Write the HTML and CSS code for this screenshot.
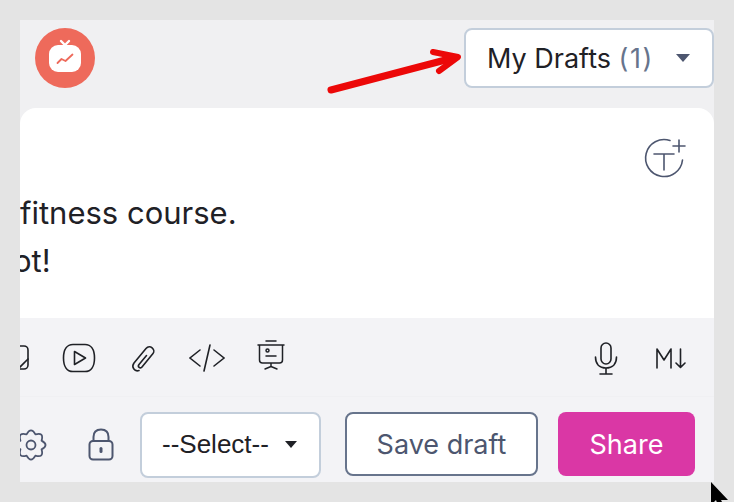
FILE: index.html
```html
<!DOCTYPE html>
<html lang="en">
<head>
  <meta charset="UTF-8">
  <title>My Drafts</title>
  <link rel="stylesheet" href="styles.css">
</head>
<body>
  <div class="panel">
    <header class="header">
      <div class="logo">
        <svg width="60" height="60" viewBox="0 0 60 60">
          <circle cx="30" cy="30" r="30" fill="#ee6a5b"/>
          <path d="M26 13l4 4 4-4" fill="none" stroke="#fff" stroke-width="2.4" stroke-linecap="round"/>
          <rect x="14" y="17" width="32" height="27" rx="9" fill="#fff"/>
          <path d="M22.500 35l4-4 4 2 7-6.500" fill="none" stroke="#ee6a5b" stroke-width="1.800" stroke-linecap="round" stroke-linejoin="round"/>
        </svg>
      </div>
      <button class="drafts">
        <span>My Drafts <span class="count">(1)</span></span>
        <span class="caret caret-drafts"></span>
      </button>
    </header>

    <main class="card">
      <div class="card-tools">
        <svg width="46" height="46" viewBox="0 0 46 46" fill="none" stroke="#4d566f" stroke-width="1.600" stroke-linecap="round">
          <path d="M29 4.500A18.500 18.500 0 1 0 41.500 24"/>
          <path d="M13 18h20M23 18v16"/>
          <path d="M32 10h12M38 4v12"/>
        </svg>
      </div>
      <p class="line line-one">fitness course.</p>
      <p class="line line-two">ot!</p>
    </main>

    <div class="toolbar">
      <div class="tool-group">
        <svg class="icon-image" width="28" height="26" viewBox="0 0 28 26" fill="none" stroke="#1f2126" stroke-width="1.600" stroke-linecap="round">
          <rect x="1" y="1" width="26" height="23" rx="4"/>
          <path d="M17 24l10-10"/>
        </svg>
        <svg class="icon-play" width="34" height="30" viewBox="0 0 34 30" fill="none" stroke="#1f2126" stroke-width="1.600" stroke-linejoin="round">
          <path d="M11 1.500h12c6 0 9.500 5 9.500 13.500s-3.500 13.500-9.500 13.500H11C5 28.500 1.500 23.500 1.500 15S5 1.500 11 1.500z"/>
          <path d="M12.500 8.500l11 6.500-11 6.500z"/>
        </svg>
        <svg class="icon-clip" width="26" height="30" viewBox="0 0 26 30" fill="none" stroke="#1f2126" stroke-width="1.600" stroke-linecap="round">
          <path d="M16.500 12.500L9 21.500c-1.800 2.200 1.200 4.800 3 2.500L23 10.500c3-3.800-3-9.800-7-5L4 20c-3 4 .5 9 5 7.500"/>
        </svg>
        <svg class="icon-code" width="38" height="30" viewBox="0 0 38 30" fill="none" stroke="#1f2126" stroke-width="1.600" stroke-linecap="round">
          <path d="M12 7L2 15l10 8M26 7l10 8-10 8M22 2l-6 26"/>
        </svg>
        <svg class="icon-slides" width="28" height="30" viewBox="0 0 28 30" fill="none" stroke="#1f2126" stroke-width="1.500" stroke-linecap="round" stroke-linejoin="round">
          <path d="M9 1h10M1 5h26M2.500 5v15c0 2 1 3 3 3h17c2 0 3-1 3-3V5M14 23v3.500M8 29l6-2.500 6 2.500M9 16h10"/>
          <circle cx="10.500" cy="10.500" r="1.500"/>
        </svg>
      </div>
      <div class="tool-group tool-group-right">
        <svg class="icon-mic" width="26" height="33" viewBox="0 0 26 33" fill="none" stroke="#1f2126" stroke-width="1.600" stroke-linecap="round">
          <rect x="8" y="1" width="10" height="21" rx="5"/>
          <path d="M2.500 15c0 7 4 11 10.500 11s10.500-4 10.500-11M13 26v6M7 32h12"/>
        </svg>
        <svg class="icon-md" width="30" height="23" viewBox="0 0 30 23" fill="none" stroke="#1f2126" stroke-width="1.600" stroke-linecap="round" stroke-linejoin="round">
          <path d="M1 21V2l7 11 7-11v19M24.500 2v18M20 16l4.500 4.500L29 16"/>
        </svg>
      </div>
    </div>

    <footer class="footer">
      <svg class="icon-gear" width="32" height="34" viewBox="0 0 32 34" fill="none" stroke="#4d566f" stroke-width="1.800" stroke-linejoin="round">
        <path d="M26.600 12.600Q34.500 17 26.600 21.400Q29.100 30.100 20.400 27.600Q16 35.500 11.600 27.600Q2.900 30.100 5.400 21.400Q-2.500 17 5.400 12.600Q2.900 3.900 11.600 6.400Q16 -1.500 20.400 6.400Q29.100 3.900 26.600 12.600z"/>
        <circle cx="16" cy="17" r="4.500"/>
      </svg>
      <svg class="icon-lock" width="26" height="33" viewBox="0 0 26 33" fill="none" stroke="#4d566f" stroke-width="2" stroke-linejoin="round">
        <rect x="1.500" y="13" width="23" height="18.500" rx="3.500"/>
        <path d="M5.500 13V9c0-5 3-7.500 7.500-7.500S20.500 4 20.500 9v4"/>
        <rect x="11.500" y="19" width="3" height="6" rx="1.500" fill="#4d566f" stroke="none"/>
      </svg>
      <button class="select">
        <span>--Select--</span>
        <span class="caret caret-select"></span>
      </button>
      <button class="save">Save draft</button>
      <button class="share">Share</button>
    </footer>

    <svg class="arrow" width="140" height="50" viewBox="0 0 140 50" fill="none" stroke="#ec0808" stroke-linecap="round" stroke-linejoin="round">
      <path d="M6 41L128 9" stroke-width="7"/>
      <path d="M108 3l25 5-19 14" stroke-width="6"/>
    </svg>
  </div>

  <svg class="cursor" width="18" height="20" viewBox="0 0 18 20">
    <path d="M1 0l17 18-7 0 4 8H9l-3-8-5 5z" fill="#000"/>
  </svg>
</body>
</html>
```

FILE: styles.css
```css
body {
  margin: 0;
  height: 502px;
  overflow: hidden;
  background: #e4e4e4;
  font-family: Inter, "Liberation Sans", sans-serif;
}
button {
  font-family: inherit;
  cursor: pointer;
}
svg {
  display: block;
  flex: none;
}
.panel {
  position: relative;
  width: 694px;
  height: 462px;
  margin: 20px 0 0 20px;
  overflow: hidden;
  background: #f0f0f2;
}
.header {
  display: flex;
  align-items: flex-start;
  justify-content: space-between;
  height: 88px;
  padding: 8px 0 0 15px;
  box-sizing: border-box;
}
.drafts {
  display: flex;
  align-items: center;
  justify-content: space-between;
  width: 250px;
  height: 60px;
  padding: 0 22px 0 21px;
  background: #fff;
  border: 2px solid #c3cedb;
  border-radius: 8px;
  font-size: 27px;
  color: #1f2126;
}
.count {
  letter-spacing: 1.500px;
  color: #67748c;
}
.caret {
  display: block;
  width: 0;
  height: 0;
  border-style: solid;
  border-color: transparent;
  border-bottom-width: 0;
}
.caret-drafts {
  border-width: 8px 7.5px 0;
  border-top-color: #4d566f;
}
.caret-select {
  border-width: 7px 6.500px 0;
  border-top-color: #1f2126;
}
.card {
  height: 210px;
  box-sizing: border-box;
  padding-top: 28px;
  background: #fff;
  border-radius: 16px 16px 0 0;
}
.card-tools {
  display: flex;
  justify-content: flex-end;
  height: 53px;
  padding-right: 27px;
}
.line {
  margin: 0;
  height: 48px;
  line-height: 48px;
  font-size: 31px;
  color: #1f2126;
  white-space: nowrap;
}
.line-two {
  margin-left: -7px;
}
.toolbar {
  display: flex;
  align-items: center;
  justify-content: space-between;
  height: 79px;
  padding-top: 2px;
  background: #f3f3f6;
  border-bottom: 1px solid #f0f0f3;
  box-sizing: border-box;
}
.tool-group {
  display: flex;
  align-items: center;
}
.tool-group-right {
  padding-right: 28px;
}
.icon-image {
  margin-left: -19px;
}
.icon-play {
  margin-left: 33px;
}
.icon-clip {
  margin-left: 34px;
}
.icon-code {
  margin-left: 32px;
}
.icon-slides {
  margin-left: 31px;
  margin-top: -6px;
}
.icon-md {
  margin-left: 37px;
}
.footer {
  display: flex;
  align-items: flex-start;
  height: 85px;
  padding-top: 15px;
  box-sizing: border-box;
  background: #f3f3f6;
}
.icon-gear {
  margin: 16px 0 0 -5px;
}
.icon-lock {
  margin: 16px 0 0 41px;
}
.select {
  display: flex;
  align-items: center;
  justify-content: space-between;
  width: 181px;
  height: 66px;
  margin-left: 26px;
  padding: 0 22px 2px 20px;
  background: #fff;
  border: 2px solid #c3cedb;
  border-radius: 8px;
  font-family: "Liberation Sans", sans-serif;
  font-size: 26px;
  color: #1f2126;
}
.save {
  width: 193px;
  height: 64px;
  margin-left: 24px;
  background: #fff;
  border: 2px solid #67748c;
  border-radius: 8px;
  font-size: 27px;
  color: #4d566f;
}
.share {
  width: 137px;
  height: 64px;
  margin-left: 20px;
  background: #da37a5;
  border: none;
  border-radius: 8px;
  font-size: 27px;
  color: #fff;
}
.arrow {
  position: absolute;
  left: 305px;
  top: 29px;
}
.cursor {
  position: absolute;
  left: 710px;
  top: 482px;
}
```
